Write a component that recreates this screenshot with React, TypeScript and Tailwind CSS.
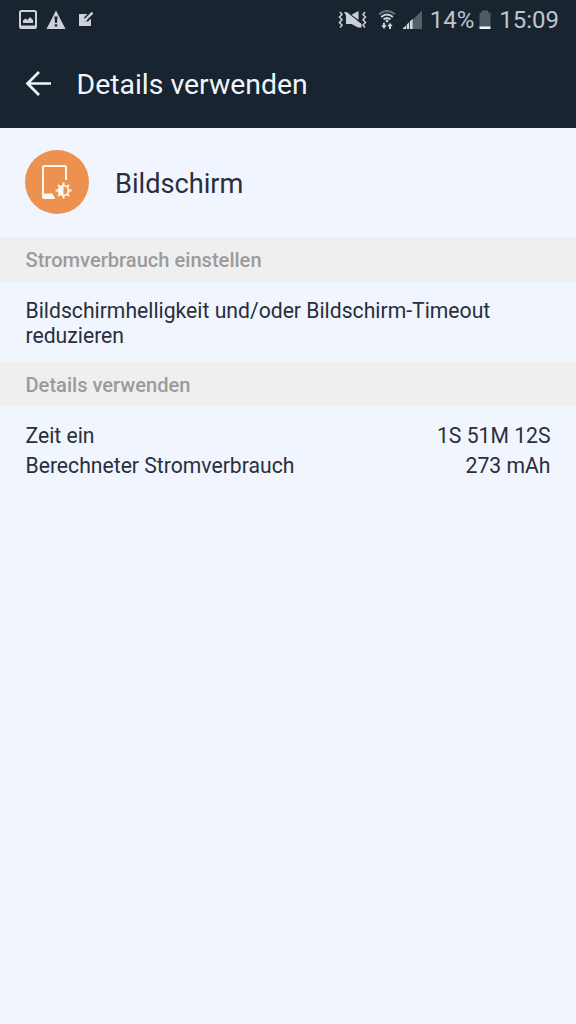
import React from 'react';

function PictureIcon() {
  return (
    <svg className="h-[20px] w-[18px]" viewBox="0 0 18 20" fill="none">
      <rect x="1" y="1" width="16" height="17" rx="1.500" stroke="#cdd2d8" strokeWidth="2" />
      <path d="M1 15.500h16V18.500H1z" fill="#cdd2d8" />
      <path d="M4 13V10.500l2.500-2 2 1.500 2.500-3 3 3v3z" fill="#cdd2d8" />
    </svg>
  );
}

function WarningIcon() {
  return (
    <svg className="h-[20px] w-[20px]" viewBox="0 0 20 20">
      <path d="M10 0.500 L19.500 19 H0.500Z" fill="#cdd2d8" />
      <path d="M8.500 6.500h3l-.5 6.500H9zM8.700 14.200h2.600v2.400h-2.600z" fill="#18242f" />
    </svg>
  );
}

function EditIcon() {
  return (
    <svg className="h-[18px] w-[17px]" viewBox="0 0 17 18">
      <path d="M1 4h8.500L6 7.500v4h4L13 8.500V16H1z" fill="#cdd2d8" />
      <path d="M6 11.500V8.500L7.500 8l6.200-6.300 1.700 1.700-6.300 6.300-.6 1.800z" fill="#cdd2d8" />
    </svg>
  );
}

function VibrateIcon() {
  return (
    <svg className="h-[20px] w-[30px]" viewBox="0 0 30 20" fill="none">
      <path d="M2 2l2 2.500-2.500 2.500 2.500 2.800-2.500 2.700L4 15l-2 2.500M27 2l-2 2.500 2.500 2.500-2.500 2.800 2.500 2.700L25 15l2 2.500" stroke="#cdd2d8" strokeWidth="1.500" />
      <path d="M13.500 4.800L20.500 1v9z" fill="#cdd2d8" />
      <path d="M6 2l3 .2L23.500 14v3.500H20L13.500 14H8V5.500z" fill="#cdd2d8" />
    </svg>
  );
}

function WifiIcon() {
  return (
    <svg className="h-[20px] w-[18px]" viewBox="0 0 18 20" fill="none">
      <path d="M1.200 4.200Q9-2.200 16.800 4.200" stroke="#68727b" strokeWidth="2" />
      <path d="M3.200 7Q9 1.800 14.800 7M5.600 9.500Q9 6.500 12.400 9.500" stroke="#cdd2d8" strokeWidth="1.900" />
      <circle cx="9" cy="11" r="1.400" fill="#cdd2d8" />
      <path d="M5 12.800h2v2.500h1.700L6 18.900l-2.700-3.600H5zM11 18.900h2v-2.600h1.700L12 12.700 9.300 16.300H11z" fill="#cdd2d8" />
    </svg>
  );
}

function SignalIcon() {
  return (
    <svg className="h-[20px] w-[19px]" viewBox="0 0 19 20">
      <path d="M10 9.500L19 .5V19h-9z" fill="#56616a" />
      <path d="M0 19v-.8l3-2.800V19zM3.700 19v-4.300L6.200 12v7zM7 19v-7.700L9.700 8.800V19z" fill="#d5dade" />
    </svg>
  );
}

function BatteryIcon() {
  return (
    <svg className="h-[20px] w-[12px]" viewBox="0 0 12 20">
      <path d="M.5 2.500h2.500V.5h6v2h2.500V17H.5z" fill="#505a62" />
      <path d="M.5 16.500h11V19H.5z" fill="#f1f5f8" />
    </svg>
  );
}

function ScreenIcon() {
  return (
    <svg className="size-16 shrink-0" viewBox="0 0 64 64" fill="none">
      <circle cx="32" cy="32" r="32" fill="#ed9150" />
      <path d="M41 30V17.500q0-1.500-1.500-1.500H19.500q-1.500 0-1.500 1.500v29q0 1.500 1.500 1.500h10" stroke="#fff7ed" strokeWidth="2" />
      <path d="M18 43.500h9.500l2.500 5H18z" fill="#fff7ed" />
      <path d="M38.500 32.500v16M30.500 40.500h16M32.900 34.900l11.200 11.200M44.100 34.900L32.900 46.100" stroke="#fff7ed" strokeWidth="2" />
      <circle cx="38.500" cy="40.500" r="5.800" fill="#fff7ed" />
      <path d="M38.500 36.500a4 4 0 0 1 0 8z" fill="#ed9150" />
    </svg>
  );
}

function SectionHeading({ children }: { children: React.ReactNode }) {
  return (
    <h2 className="flex h-[45px] items-center bg-[#efefef] px-[25.500px] pt-0.5 text-[20.100px] font-medium text-[#9b9b9b]">
      <span className="whitespace-nowrap">{children}</span>
    </h2>
  );
}

function DetailRow({ label, value }: { label: string; value: string }) {
  return (
    <div className="flex h-[30px] items-center justify-between">
      <span>{label}</span>
      <span>{value}</span>
    </div>
  );
}

export default function App() {
  return (
    <main className="min-h-screen w-[576px] bg-[#f1f5fd] font-['Roboto',sans-serif] text-[#282f3e]">
      <header className="h-32 bg-[#18242f]">
        <div className="flex h-10 items-center justify-between pr-[17px] pl-[19px] text-[24px] text-[#bdc5cd]">
          <div className="flex items-center">
            <PictureIcon />
            <div className="ml-[9px]"><WarningIcon /></div>
            <div className="ml-[12px] pb-0.5"><EditIcon /></div>
          </div>
          <div className="flex items-center">
            <VibrateIcon />
            <div className="ml-[10px]"><WifiIcon /></div>
            <div className="ml-[7px]"><SignalIcon /></div>
            <span className="ml-[8px]">14%</span>
            <div className="ml-[5px]"><BatteryIcon /></div>
            <span className="ml-[8px]">15:09</span>
          </div>
        </div>
        <div className="flex h-[88px] items-center pl-[25px]">
          <svg className="h-[26px] w-[27px]" viewBox="0 0 27 26" fill="none" stroke="#f1f5fd" strokeWidth="2.700">
            <path d="M14 1L2.500 12.500 14 24M2.500 12.500H26" />
          </svg>
          <h1 className="ml-[24.500px] pt-0.5 text-[28.400px] text-[#f1f5fd]">Details verwenden</h1>
        </div>
      </header>
      <section className="flex h-[109px] items-center pb-0.5 pl-[25px]">
        <ScreenIcon />
        <span className="ml-[26px] pt-1.5 text-[27.200px]">Bildschirm</span>
      </section>
      <SectionHeading>Stromverbrauch einstellen</SectionHeading>
      <p className="h-[80px] px-[25.500px] pt-[16px] text-[21.170px] leading-[25px]">
        Bildschirmhelligkeit und/oder Bildschirm-Timeout<br />reduzieren
      </p>
      <SectionHeading>Details verwenden</SectionHeading>
      <section className="px-[25.500px] pt-[14px] text-[21.170px]">
        <DetailRow label="Zeit ein" value="1S 51M 12S" />
        <DetailRow label="Berechneter Stromverbrauch" value="273 mAh" />
      </section>
    </main>
  );
}
